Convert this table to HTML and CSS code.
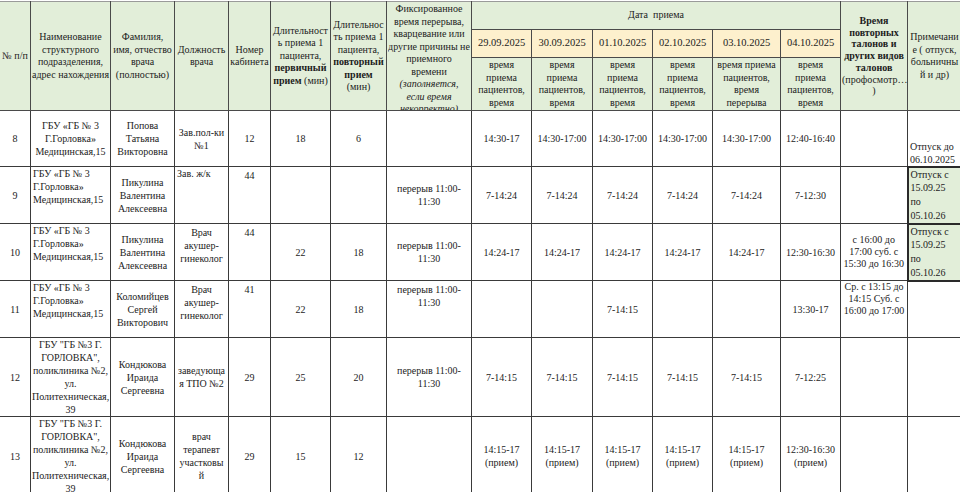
FILE: index.html
```html
<!DOCTYPE html>
<html lang="ru">
<head>
<meta charset="utf-8">
<title>График приема</title>
<link rel="stylesheet" href="styles.css">
</head>
<body>
<table class="sheet">
  <colgroup>
    <col class="c-num"><col class="c-org"><col class="c-name"><col class="c-pos"><col class="c-cab">
    <col class="c-first"><col class="c-rep"><col class="c-break">
    <col class="c-d1"><col class="c-d2"><col class="c-d3"><col class="c-d4"><col class="c-d5"><col class="c-d6">
    <col class="c-extra"><col class="c-note">
  </colgroup>
  <thead>
    <tr class="h1">
      <th rowspan="3">№ п/п</th>
      <th rowspan="3">Наименование<br>структурного<br>подразделения,<br>адрес нахождения</th>
      <th rowspan="3">Фамилия,<br>имя, отчество<br>врача<br>(полностью)</th>
      <th rowspan="3">Должность<br>врача</th>
      <th rowspan="3">Номер<br>кабинета</th>
      <th rowspan="3">Длительност<br>ь приема 1<br>пациента,<br><b>первичный</b><br><b>прием</b> (мин)</th>
      <th rowspan="3">Длительнос<br>ть приема 1<br>пациента,<br><b>повторный</b><br><b>прием</b><br>(мин)</th>
      <th rowspan="3" class="clip-cell"><div class="clip">Фиксированное<br>время перерыва,<br>кварцевание или<br>другие причины не<br>приемного<br>времени<br><i>(заполняется,<br>если время<br>некорректно)</i></div></th>
      <th colspan="6" class="date-title">Дата&nbsp; приема</th>
      <th rowspan="3" class="bold-head"><b>Время<br>повторных<br>талонов и<br>других видов<br>талонов</b><br>(профосмотр…<br>)</th>
      <th rowspan="3">Примечани<br>е ( отпуск,<br>больничны<br>й и др)</th>
    </tr>
    <tr class="h2">
      <th class="date">29.09.2025</th>
      <th class="date">30.09.2025</th>
      <th class="date">01.10.2025</th>
      <th class="date">02.10.2025</th>
      <th class="date">03.10.2025</th>
      <th class="date">04.10.2025</th>
    </tr>
    <tr class="h3">
      <th>время<br>приема<br>пациентов,<br>время</th>
      <th>время<br>приема<br>пациентов,<br>время</th>
      <th>время<br>приема<br>пациентов,<br>время</th>
      <th>время<br>приема<br>пациентов,<br>время</th>
      <th>время приема<br>пациентов,<br>время<br>перерыва</th>
      <th>время<br>приема<br>пациентов,<br>время</th>
    </tr>
  </thead>
  <tbody>
    <tr class="r-short">
      <td>8</td>
      <td>ГБУ «ГБ № 3<br>Г.Горловка»<br>Медицинская,15</td>
      <td>Попова<br>Татьяна<br>Викторовна</td>
      <td>Зав.пол-ки<br>№1</td>
      <td>12</td>
      <td>18</td>
      <td>6</td>
      <td></td>
      <td>14:30-17</td>
      <td>14:30-17:00</td>
      <td>14:30-17:00</td>
      <td>14:30-17:00</td>
      <td>14:30-17:00</td>
      <td>12:40-16:40</td>
      <td></td>
      <td class="note-bottom">Отпуск до<br>06.10.2025</td>
    </tr>
    <tr class="r-short">
      <td>9</td>
      <td class="top-left">ГБУ «ГБ № 3<br>Г.Горловка»<br>Медицинская,15</td>
      <td>Пикулина<br>Валентина<br>Алексеевна</td>
      <td class="top-left">Зав. ж/к</td>
      <td class="top">44</td>
      <td></td>
      <td></td>
      <td>перерыв 11:00-<br>11:30</td>
      <td>7-14:24</td>
      <td>7-14:24</td>
      <td>7-14:24</td>
      <td>7-14:24</td>
      <td>7-14:24</td>
      <td>7-12:30</td>
      <td></td>
      <td class="note-green">Отпуск с<br>15.09.25<br>по<br>05.10.26</td>
    </tr>
    <tr class="r-short">
      <td>10</td>
      <td class="top-left">ГБУ «ГБ № 3<br>Г.Горловка»<br>Медицинская,15</td>
      <td>Пикулина<br>Валентина<br>Алексеевна</td>
      <td class="top">Врач<br>акушер-<br>гинеколог</td>
      <td class="top">44</td>
      <td>22</td>
      <td>18</td>
      <td>перерыв 11:00-<br>11:30</td>
      <td>14:24-17</td>
      <td>14:24-17</td>
      <td>14:24-17</td>
      <td>14:24-17</td>
      <td>14:24-17</td>
      <td>12:30-16:30</td>
      <td class="tight">с 16:00 до<br>17:00 суб. с<br>15:30 до 16:30</td>
      <td class="note-green">Отпуск с<br>15.09.25<br>по<br>05.10.26</td>
    </tr>
    <tr class="r-mid">
      <td>11</td>
      <td class="top-left">ГБУ «ГБ № 3<br>Г.Горловка»<br>Медицинская,15</td>
      <td>Коломийцев<br>Сергей<br>Викторович</td>
      <td class="top">Врач<br>акушер-<br>гинеколог</td>
      <td class="top">41</td>
      <td>22</td>
      <td>18</td>
      <td class="top">перерыв 11:00-<br>11:30</td>
      <td></td>
      <td></td>
      <td>7-14:15</td>
      <td></td>
      <td></td>
      <td>13:30-17</td>
      <td class="top tight">Ср. с 13:15 до<br>14:15 Суб. с<br>16:00 до 17:00</td>
      <td></td>
    </tr>
    <tr class="r-tall">
      <td>12</td>
      <td>ГБУ "ГБ №3 Г.<br>ГОРЛОВКА",<br>поликлиника №2,<br>ул.<br>Политехническая,<br>39</td>
      <td>Кондюкова<br>Ираида<br>Сергеевна</td>
      <td>заведующа<br>я ТПО №2</td>
      <td>29</td>
      <td>25</td>
      <td>20</td>
      <td>перерыв 11:00-<br>11:30</td>
      <td>7-14:15</td>
      <td>7-14:15</td>
      <td>7-14:15</td>
      <td>7-14:15</td>
      <td>7-14:15</td>
      <td>7-12:25</td>
      <td></td>
      <td></td>
    </tr>
    <tr class="r-tall">
      <td>13</td>
      <td>ГБУ "ГБ №3 Г.<br>ГОРЛОВКА",<br>поликлиника №2,<br>ул.<br>Политехническая,<br>39</td>
      <td>Кондюкова<br>Ираида<br>Сергеевна</td>
      <td>врач<br>терапевт<br>участковы<br>й</td>
      <td>29</td>
      <td>15</td>
      <td>12</td>
      <td></td>
      <td>14:15-17<br>(прием)</td>
      <td>14:15-17<br>(прием)</td>
      <td>14:15-17<br>(прием)</td>
      <td>14:15-17<br>(прием)</td>
      <td>14:15-17<br>(прием)</td>
      <td>12:30-16:30<br>(прием)</td>
      <td></td>
      <td></td>
    </tr>
  </tbody>
</table>
</body>
</html>
```

FILE: styles.css
```css
html, body {
  margin: 0;
  padding: 0;
  background: #ffffff;
  overflow: hidden;
}

body {
  width: 960px;
  height: 492px;
  font-family: "Liberation Serif", "Times New Roman", serif;
  font-size: 10px;
  color: #1c1c1c;
}

.sheet {
  border-collapse: collapse;
  table-layout: fixed;
  width: 962px;
  margin-top: 1px;
  margin-left: -1px;
}

.c-num { width: 31px; }
.c-org { width: 80px; }
.c-name { width: 64px; }
.c-pos { width: 54px; }
.c-cab { width: 42px; }
.c-first { width: 60px; }
.c-rep { width: 56px; }
.c-break { width: 85px; }
.c-d1 { width: 60px; }
.c-d2 { width: 61px; }
.c-d3 { width: 60px; }
.c-d4 { width: 60px; }
.c-d5 { width: 68px; }
.c-d6 { width: 60px; }
.c-extra { width: 67px; }
.c-note { width: 54px; }

th, td {
  border: 1px solid #3a3a3a;
  padding: 0 1px;
  text-align: center;
  vertical-align: middle;
  overflow: hidden;
  white-space: nowrap;
}

th {
  background: #e2eed9;
  font-weight: normal;
  line-height: 12.5px;
  border-color: #4a4a4a;
}

thead tr:first-child th {
  border-top-color: #9a9a9a;
}

th b, td b {
  font-weight: bold;
}

.h1 { height: 28px; }
.h2 { height: 28px; }
.h3 { height: 53px; }

.date {
  background: #fdf0cd;
  font-size: 10.5px;
}

.clip-cell {
  vertical-align: top;
}

.clip {
  height: 107px;
  overflow: hidden;
  padding-top: 1px;
}

.bold-head {
  line-height: 11.8px;
}

td {
  line-height: 13px;
}

.r-short { height: 56px; }
.r-mid { height: 57px; }
.r-tall { height: 78px; }

.top {
  vertical-align: top;
  padding-top: 2px;
}

.top-left {
  vertical-align: top;
  text-align: left;
  padding-left: 2px;
}

.tight {
  line-height: 12px;
  padding: 0;
}

.note-bottom {
  vertical-align: bottom;
  text-align: left;
  padding-left: 2px;
}

.note-green {
  background: #e2eed9;
  vertical-align: top;
  text-align: left;
  line-height: 13.8px;
  border: 2px solid #2a2a2a;
  padding-left: 2px;
}
```
